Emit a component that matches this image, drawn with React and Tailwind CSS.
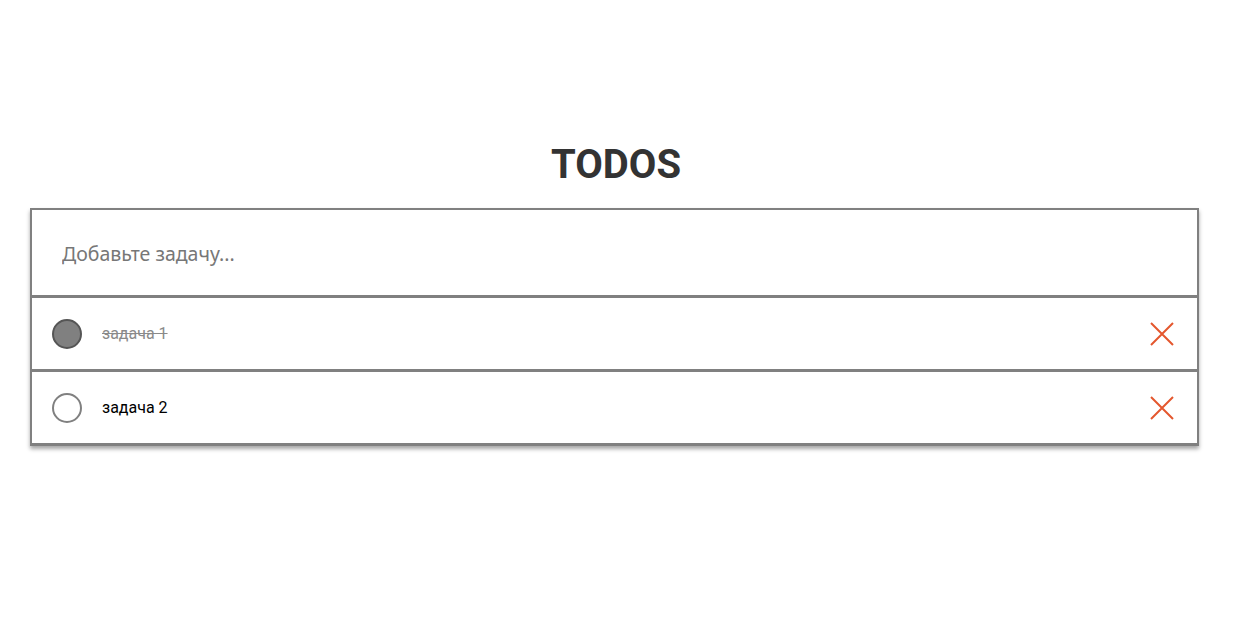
import React from "react";

function Check({ done }) {
  return (
    <div
      className={
        "w-[30px] h-[30px] rounded-full border-2 shrink-0 " +
        (done ? "bg-[#808080] border-[#555]" : "bg-white border-[#808080]")
      }
    />
  );
}

function XIcon() {
  return (
    <svg width="26" height="26" viewBox="0 0 26 26" className="shrink-0">
      <path d="M2 2 L24 24 M24 2 L2 24" stroke="#e4572e" strokeWidth="2" fill="none" />
    </svg>
  );
}

function Item({ text, done }) {
  return (
    <div className="flex items-center h-[74px] border-x-2 border-b-[3px] border-[#808080] bg-white pl-[20px] pr-[22px]">
      <Check done={done} />
      <span
        className={
          "ml-[20px] text-[16px] font-['Roboto',sans-serif] " +
          (done ? "line-through text-[#8a8a8a]" : "text-black")
        }
      >
        {text}
      </span>
      <div className="flex-1" />
      <XIcon />
    </div>
  );
}

export default function App() {
  return (
    <div className="min-h-[624px] bg-white pt-[141px]">
      <h1 className="text-center font-['Roboto',sans-serif] font-bold text-[40px] leading-[48px] text-[#333] ml-[-3px]">
        TODOS
      </h1>
      <div className="ml-[30px] w-[1169px] mt-[19px] shadow-[0_3px_4px_rgba(0,0,0,0.35)]">
        <div className="flex items-center h-[90px] border-x-2 border-t-2 border-b-[3px] border-[#808080] bg-white pl-[30px] pt-[2px]">
          <input
            className="w-full outline-none text-[19.5px] font-['Noto_Sans',sans-serif] placeholder:text-[#777] bg-transparent"
            placeholder="Добавьте задачу..."
          />
        </div>
        <Item text="задача 1" done />
        <Item text="задача 2" />
      </div>
    </div>
  );
}
